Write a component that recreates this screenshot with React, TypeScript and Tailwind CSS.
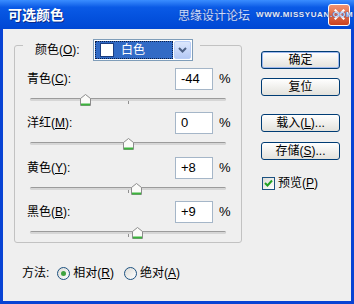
import React from 'react';

const rows = [
  { name: '青色', key: 'C', value: -44 },
  { name: '洋红', key: 'M', value: 0 },
  { name: '黄色', key: 'Y', value: 8 },
  { name: '黑色', key: 'B', value: 9 },
];

const fmt = (v: number) => (v > 0 ? `+${v}` : `${v}`);

const Label: React.FC<{ text: string; k: string; colon?: boolean }> = ({ text, k, colon = true }) => (
  <span>
    {text}(<span className="underline">{k}</span>){colon ? ':' : ''}
  </span>
);

const Thumb: React.FC<{ value: number }> = ({ value }) => {
  // track is 196px wide, -100..100
  const left = 98 + (value / 100) * 98 - 5;
  return (
    <svg className="absolute top-[4px]" style={{ left }} width="11" height="12" viewBox="0 0 11 12">
      <path d="M0.5 4.5 L5.5 0.5 L10.5 4.5 V11.5 H0.5 Z" fill="#fbfbf9" stroke="#8c8c8c" />
      <path d="M1 10.5 H10" stroke="#3cb43c" strokeWidth="2" />
    </svg>
  );
};

const Slider: React.FC<{ value: number }> = ({ value }) => (
  <div className="h-[22px] pl-[15px]">
    <div className="relative w-[196px] h-full">
      <div className="absolute top-[8px] left-0 right-0 h-[3px] rounded-full border-t border-[#9b9b9b] border-b-white bg-[#d6d6d6]" />
      <div className="absolute top-[11px] left-[98px] w-px h-[3px] bg-[#8f8f8f]" />
      <Thumb value={value} />
    </div>
  </div>
);

const XpButton: React.FC<{ children: React.ReactNode; main?: boolean }> = ({ children, main }) => (
  <div
    className={`w-[79px] h-[18px] rounded-[3px] border border-[#003c74] bg-linear-to-b from-white to-[#e3e2dc] flex items-center justify-center text-[12px] text-black leading-none ${
      main ? 'shadow-[inset_0_0_0_1px_#9fb9ee]' : ''
    }`}
  >
    {children}
  </div>
);

export default function App() {
  return (
    <div className="w-[354px] h-[304px] flex flex-col bg-[#0843d4] font-['Liberation_Sans','Noto_Sans_CJK_SC',sans-serif] text-[12px] text-black select-none">
      {/* title bar */}
      <div className="relative h-[29px] shrink-0 flex items-center justify-between pl-[8px] pr-[4px] bg-linear-to-b from-[#3a8dff] via-[#0a5ae6] via-25% to-[#0047d4]">
        <span className="text-white font-bold text-[14px] font-['Noto_Sans_CJK_SC',sans-serif] [text-shadow:1px_1px_0_#0a2a8a]">
          可选颜色
        </span>
        <div className="w-[22px] h-[22px] rounded-[3px] border border-white bg-linear-to-b from-[#f0926f] to-[#c9401d] flex items-center justify-center">
          <svg width="11" height="11" viewBox="0 0 11 11">
            <path d="M1.5 1.5 L9.5 9.5 M9.5 1.5 L1.5 9.5" stroke="white" strokeWidth="2.2" strokeLinecap="square" />
          </svg>
        </div>
        <div className="absolute z-10 left-[178px] top-[6px] flex items-center gap-[6px] whitespace-nowrap pointer-events-none">
          <span className="text-[12px] text-[#c9dcff] font-['Noto_Sans_CJK_SC',sans-serif] [text-shadow:0_0_1px_#1e3fa0,0_0_1px_#1e3fa0]">
            思缘设计论坛
          </span>
          <span className="text-[8px] font-bold tracking-[0.6px] text-[#dfeaff] [text-shadow:0_0_1px_#1e3fa0,0_0_1px_#1e3fa0]">
            WWW.MISSYUAN.COM
          </span>
        </div>
      </div>

      {/* body */}
      <div className="flex-1 mx-[3px] mb-[3px] bg-[#efefef] flex flex-col">
        <div className="flex pt-[16px] pl-[11px]">
          {/* group box */}
          <div className="w-[228px] h-[198px] border border-[#c2c2c2] rounded-[3px]">
            <div className="-mt-[7px] ml-[8px] w-[177px] h-[22px] pl-[12px] flex items-center bg-[#efefef]">
              <span className="w-[58px]">
                <Label text="颜色" k="O" />
              </span>
              <div className="w-[100px] h-[22px] border border-[#7f9db9] bg-white p-[1px] flex">
                <div className="flex-1 bg-[#316ac5] outline-1 outline-dotted outline-[#0b1f4a] -outline-offset-1 flex items-center pl-[5px] gap-[7px]">
                  <div className="w-[14px] h-[14px] bg-white border border-[#1b3d80]" />
                  <span className="text-white">白色</span>
                </div>
                <div className="w-[17px] ml-[1px] rounded-[2px] bg-linear-to-b from-[#dce7fd] to-[#b5c9f5] border border-[#b8cdf6] flex items-center justify-center">
                  <svg width="9" height="6" viewBox="0 0 9 6">
                    <path d="M1 1 L4.5 4.5 L8 1" fill="none" stroke="#4d6185" strokeWidth="2" />
                  </svg>
                </div>
              </div>
            </div>

            <div className="mt-[7px] flex flex-col">
              {rows.map((r, i) => (
                <div key={r.key} className={i === 2 ? 'mt-[1px]' : ''}>
                  <div className="h-[22px] flex items-center">
                    <span className="w-[160px] pl-[12px]">
                      <Label text={r.name} k={r.key} />
                    </span>
                    <div className="w-[38px] h-[22px] border border-[#a5b6c8] bg-white flex items-center pl-[5px] text-[13px]">
                      {fmt(r.value)}
                    </div>
                    <span className="ml-[6px] text-[13px]">%</span>
                  </div>
                  <Slider value={r.value} />
                </div>
              ))}
            </div>
          </div>

          {/* buttons */}
          <div className="ml-[19px] pt-[6px] flex flex-col">
            <XpButton main>确定</XpButton>
            <div className="mt-[9px]">
              <XpButton>复位</XpButton>
            </div>
            <div className="mt-[18px]">
              <XpButton>
                <span>
                  载入(<span className="underline">L</span>)...
                </span>
              </XpButton>
            </div>
            <div className="mt-[10px]">
              <XpButton>
                <span>
                  存储(<span className="underline">S</span>)...
                </span>
              </XpButton>
            </div>
            <div className="mt-[14px] ml-[1px] flex items-center gap-[3px]">
              <div className="w-[13px] h-[13px] border border-[#1c5180] bg-linear-to-br from-[#dcdcd7] to-white flex items-center justify-center">
                <svg width="9" height="9" viewBox="0 0 9 9">
                  <path d="M1 4 L3.5 6.5 L8 1.5" fill="none" stroke="#21a121" strokeWidth="2" />
                </svg>
              </div>
              <Label text="预览" k="P" colon={false} />
            </div>
          </div>
        </div>

        {/* method row */}
        <div className="mt-[22px] ml-[19px] h-[16px] flex items-center">
          <span>方法:</span>
          <div className="ml-[8px] w-[13px] h-[13px] rounded-full border border-[#1c5180] bg-linear-to-br from-[#dcdcd7] to-white flex items-center justify-center">
            <div className="w-[5px] h-[5px] rounded-full bg-[#3fa33f]" />
          </div>
          <span className="ml-[3px]">
            <Label text="相对" k="R" colon={false} />
          </span>
          <div className="ml-[10px] w-[13px] h-[13px] rounded-full border border-[#1c5180] bg-linear-to-br from-[#dcdcd7] to-white" />
          <span className="ml-[3px]">
            <Label text="绝对" k="A" colon={false} />
          </span>
        </div>
      </div>
    </div>
  );
}
